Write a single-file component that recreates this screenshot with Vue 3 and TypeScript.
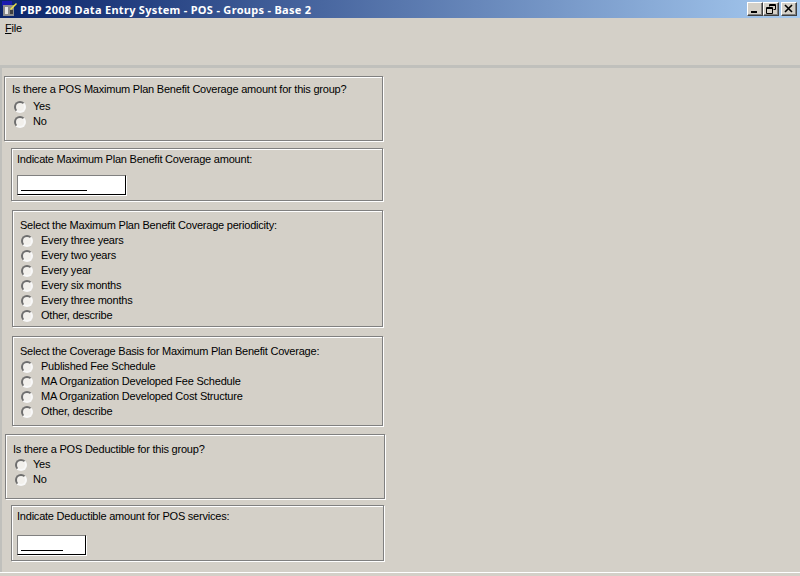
<script setup lang="ts">
interface Panel {
  kind: string
  title: string
  options?: string[]
  fieldClass?: string
}

const panels: Panel[] = [
  {
    kind: 'p1',
    title: 'Is there a POS Maximum Plan Benefit Coverage amount for this group?',
    options: ['Yes', 'No'],
  },
  { kind: 'p2', title: 'Indicate Maximum Plan Benefit Coverage amount:', fieldClass: 'wide' },
  {
    kind: 'p3',
    title: 'Select the Maximum Plan Benefit Coverage periodicity:',
    options: ['Every three years', 'Every two years', 'Every year', 'Every six months', 'Every three months', 'Other, describe'],
  },
  {
    kind: 'p4',
    title: 'Select the Coverage Basis for Maximum Plan Benefit Coverage:',
    options: ['Published Fee Schedule', 'MA Organization Developed Fee Schedule', 'MA Organization Developed Cost Structure', 'Other, describe'],
  },
  { kind: 'p5', title: 'Is there a POS Deductible for this group?', options: ['Yes', 'No'] },
  { kind: 'p6', title: 'Indicate Deductible amount for POS services:', fieldClass: 'narrow' },
]
</script>

<template>
  <div class="window">
    <header class="titlebar">
      <svg class="app-icon" width="16" height="16" viewBox="0 0 16 16">
        <rect x="0" y="0" width="10" height="5" fill="#1a1ab0" />
        <rect x="1" y="4" width="11" height="11" fill="#8c8c8c" />
        <rect x="3" y="6" width="3" height="7" fill="#e8e8e8" />
        <rect x="8" y="9" width="3" height="4" fill="#404040" />
        <path d="M8 8 L14 2 L15 3 L9 9 Z" fill="#f2e640" />
      </svg>
      <span class="title">PBP 2008 Data Entry System - POS - Groups - Base 2</span>
      <div class="controls">
        <button class="ctl">
          <svg width="10" height="10" viewBox="0 0 10 10"><rect x="1" y="7" width="6" height="2" fill="#000" /></svg>
        </button>
        <button class="ctl">
          <svg width="10" height="10" viewBox="0 0 10 10">
            <path d="M3.5 2.5 V0.5 H9.5 V5.5 H7.5 M3 1.5 H9" fill="none" stroke="#000" />
            <path d="M0.5 9.5 V3.5 H6.5 V9.5 Z M0 4.5 H7" fill="none" stroke="#000" />
          </svg>
        </button>
        <button class="ctl close">
          <svg width="10" height="10" viewBox="0 0 10 10"><path d="M1 1 L8 8 M8 1 L1 8" stroke="#000" stroke-width="1.6" fill="none" /></svg>
        </button>
      </div>
    </header>

    <nav class="menubar"><span class="menu-item"><u>F</u>ile</span></nav>

    <main class="content">
      <section v-for="p in panels" :key="p.kind" class="panel" :class="p.kind">
        <div class="panel-title">{{ p.title }}</div>
        <label v-for="o in p.options" :key="o" class="option">
          <span class="radio"></span>
          <span>{{ o }}</span>
        </label>
        <div v-if="p.fieldClass" class="field" :class="p.fieldClass"><span class="mask"></span></div>
      </section>
    </main>
    <div class="footer"></div>
  </div>
</template>

<style>
html, body {
  margin: 0;
  background: #d4d0c8;
}
</style>

<style scoped>
.window {
  width: 800px;
  height: 576px;
  overflow: hidden;
  background: #d4d0c8;
  color: #000;
  font-family: "Liberation Sans", Arial, sans-serif;
  font-size: 11px;
  letter-spacing: -0.22px;
  display: flex;
  flex-direction: column;
}
.titlebar {
  height: 18px;
  flex: none;
  display: flex;
  align-items: center;
  padding: 0 3px 0 2px;
  box-sizing: border-box;
  background: linear-gradient(90deg, #0a246a, #a6caf0);
}
.app-icon {
  flex: none;
  margin-right: 2px;
}
.title {
  color: #fff;
  font-family: "Noto Sans", Verdana, sans-serif;
  font-weight: 700;
  font-size: 11px;
  letter-spacing: 0.3px;
  white-space: nowrap;
}
.controls {
  margin-left: auto;
  display: flex;
}
.ctl {
  width: 16px;
  height: 14px;
  padding: 0;
  box-sizing: border-box;
  display: flex;
  align-items: center;
  justify-content: center;
  background: #d4d0c8;
  border: 1px solid;
  border-color: #fff #404040 #404040 #fff;
  box-shadow: inset -1px -1px 0 #808080;
}
.close {
  margin-left: 2px;
}
.menubar {
  height: 50px;
  flex: none;
  padding: 3px 0 0 5px;
  box-sizing: border-box;
  border-bottom: 3px solid #c0c0bc;
}
.menu-item {
  line-height: 14px;
}
.content {
  flex: 1;
  padding-left: 2px;
  border-left: 2px solid #c0c0bc;
  display: flex;
  flex-direction: column;
}
.footer {
  flex: none;
  height: 4px;
  box-sizing: border-box;
  border-top: 1px solid #fff;
}
.panel {
  box-sizing: border-box;
  flex: none;
  border: 1px solid #808080;
  box-shadow: 1px 1px 0 #fff, inset 1px 1px 0 #fff;
}
.panel-title,
.option {
  line-height: 15px;
  height: 15px;
  white-space: nowrap;
}
.option {
  display: flex;
  align-items: center;
}
.radio {
  flex: none;
  width: 12px;
  height: 12px;
  box-sizing: border-box;
  border-radius: 50%;
  border: 2px solid;
  border-color: #6e6e6e #f8f8f8 #f8f8f8 #6e6e6e;
  background: #f2f0ec;
  margin-right: 8px;
}
.field {
  height: 20px;
  box-sizing: border-box;
  background: #fff;
  border: 1px solid;
  border-color: #808080 #000 #000 #808080;
  box-shadow: 1px 1px 0 #fff;
  padding: 14px 0 0 3px;
}
.wide {
  width: 109px;
}
.narrow {
  width: 69px;
}
.mask {
  display: block;
  height: 1px;
  background: #000;
}
.wide .mask {
  width: 66px;
}
.narrow .mask {
  width: 42px;
}
.p1 {
  margin: 8px 0 0 0;
  width: 379px;
  height: 65px;
  padding: 5px 0 0 7px;
}
.p1 .panel-title {
  margin-bottom: 2px;
}
.p1 .radio,
.p5 .radio {
  margin-left: 2px;
  margin-right: 7px;
}
.p2 {
  margin: 7px 0 0 7px;
  width: 372px;
  height: 53px;
  padding: 3px 0 0 5px;
}
.p2 .field {
  margin-top: 8px;
}
.p3 {
  margin: 9px 0 0 8px;
  width: 371px;
  height: 117px;
  padding: 7px 0 0 7px;
}
.p4 {
  margin: 9px 0 0 8px;
  width: 371px;
  height: 90px;
  padding: 7px 0 0 7px;
}
.p3 .radio,
.p4 .radio {
  margin-left: 1px;
}
.p5 {
  margin: 8px 0 0 1px;
  width: 380px;
  height: 65px;
  padding: 7px 0 0 7px;
}
.p5 .radio {
  margin-right: 6px;
}
.p6 {
  margin: 6px 0 0 7px;
  width: 373px;
  height: 56px;
  padding: 3px 0 0 5px;
}
.p6 .field {
  margin-top: 11px;
}
</style>
